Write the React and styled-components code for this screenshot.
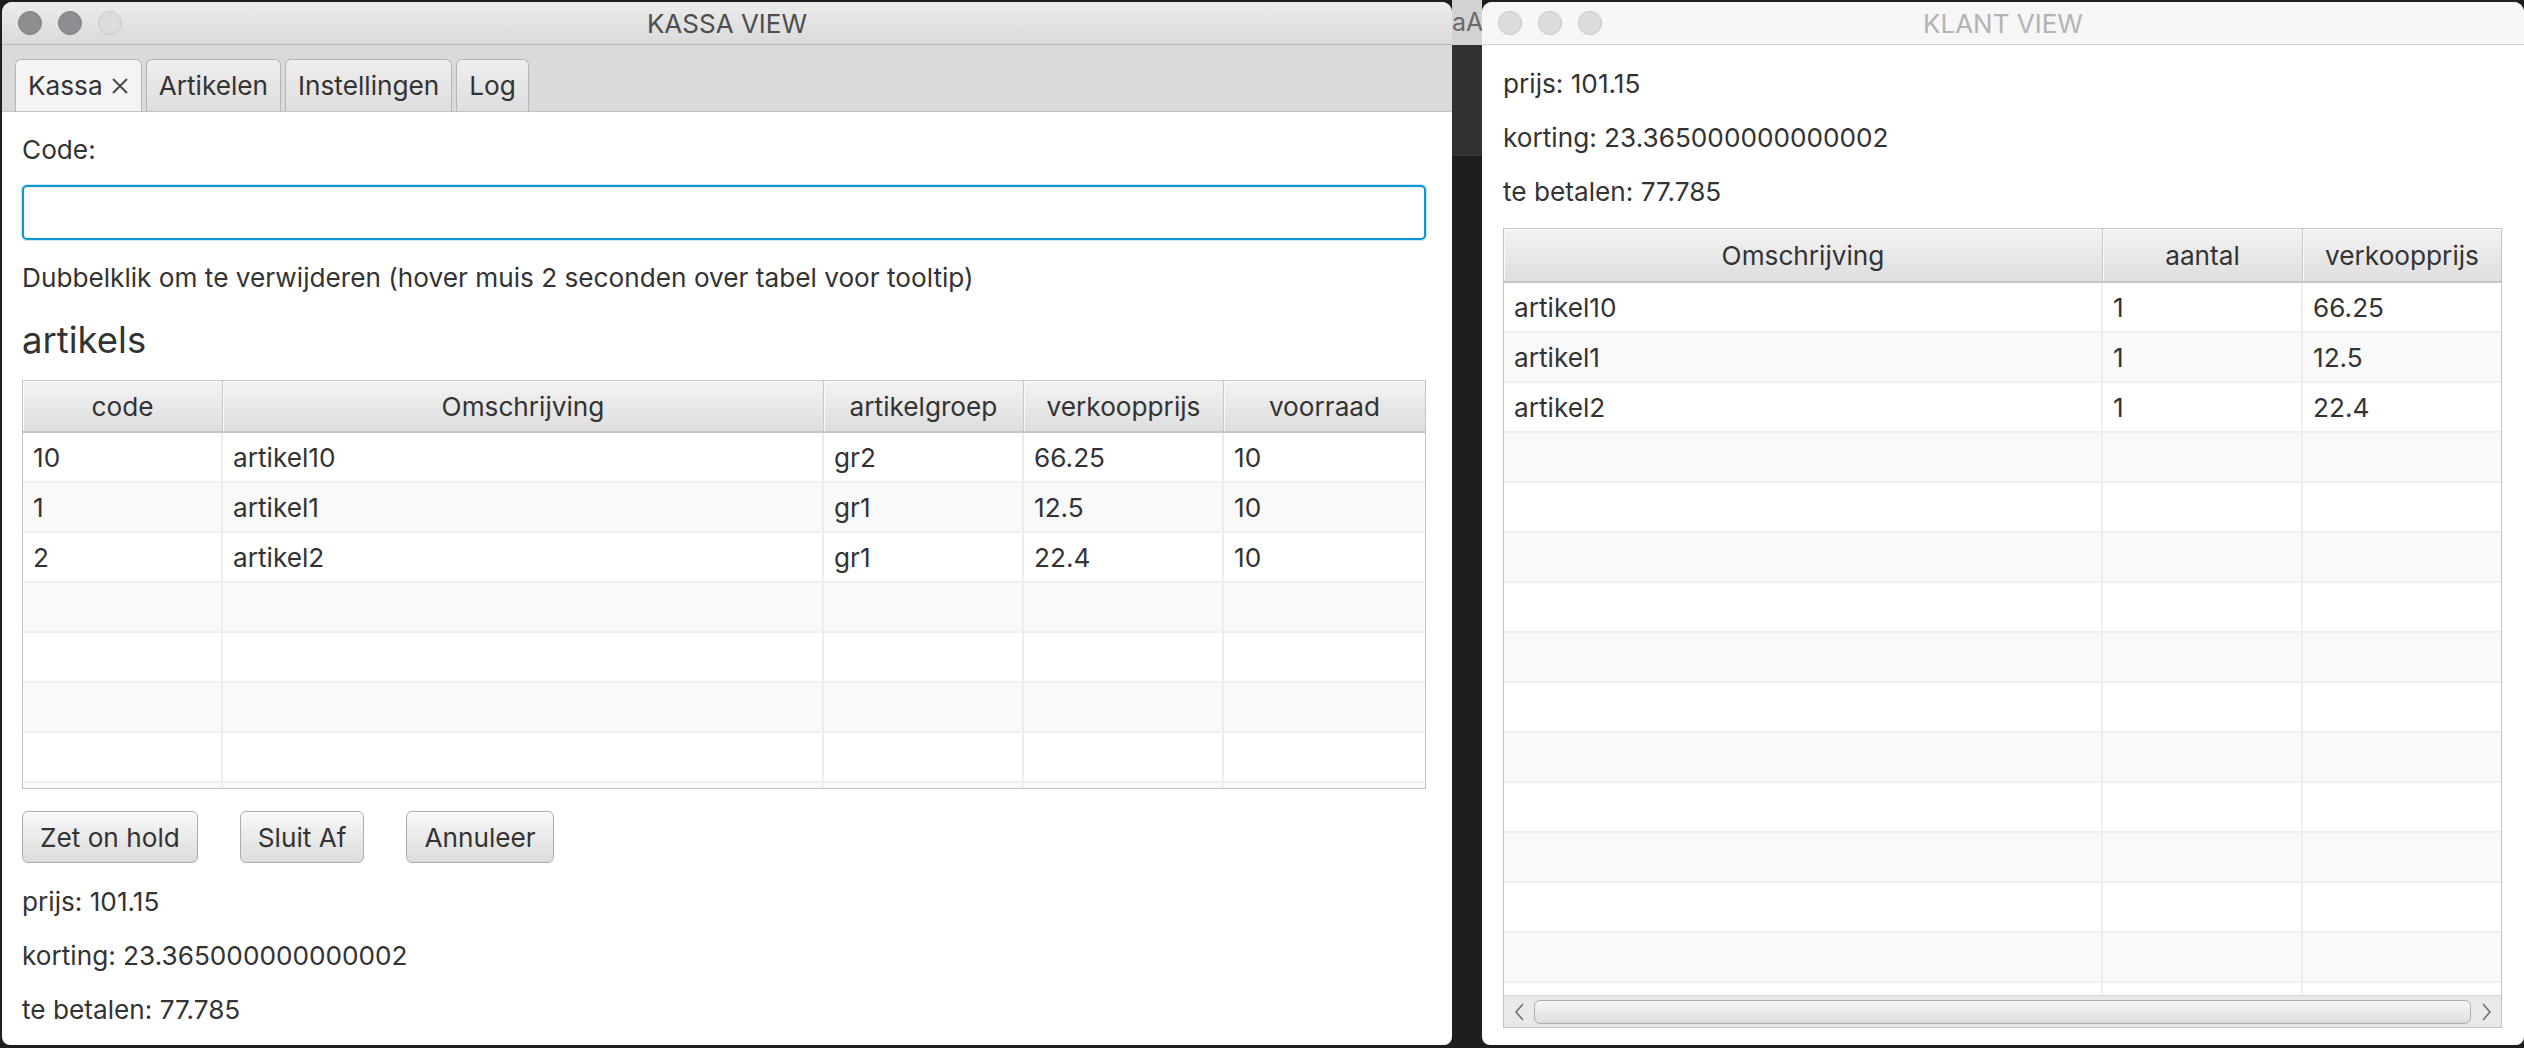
import React from 'react';
import styled, { createGlobalStyle } from 'styled-components';

const GlobalStyle = createGlobalStyle`
  html, body {
    margin: 0;
    padding: 0;
    background: #1e1e1e;
  }
  body {
    font-family: Inter, "Liberation Sans", sans-serif;
    color: #333;
    overflow: hidden;
  }
`;

const FONT = '26.2px';

const Desktop = styled.div`
  display: flex;
  align-items: flex-start;
  width: 2524px;
  height: 1048px;
  padding: 2px 0 0 2px;
  box-sizing: border-box;
  background: #1e1e1e;
  overflow: hidden;
`;

const Window = styled.div`
  flex: none;
  width: ${p => p.$width}px;
  height: 1043px;
  display: flex;
  flex-direction: column;
  background: #fff;
  border-radius: 10px 10px 8px 8px;
  overflow: hidden;
`;

const TitleBar = styled.div`
  flex: none;
  height: 42px;
  display: grid;
  grid-template-columns: 1fr auto 1fr;
  align-items: center;
  padding: 0 16px;
  background: ${p => (p.$active ? 'linear-gradient(#ececec, #dadada)' : '#f6f6f6')};
  border-bottom: 1px solid ${p => (p.$active ? '#b8b8b8' : '#d3d3d3')};
`;

const Lights = styled.div`
  display: flex;
  gap: 16px;
`;

const Light = styled.span`
  width: 24px;
  height: 24px;
  border-radius: 50%;
  box-sizing: border-box;
  background: ${p => (p.$dim ? '#dcdcdc' : '#8e8d92')};
  border: 1px solid ${p => (p.$dim ? '#c6c6c6' : '#7d7c81')};
`;

const WindowTitle = styled.div`
  font-size: 26px;
  color: ${p => (p.$active ? '#4d4d4d' : '#b3b3b3')};
`;

const TabBar = styled.div`
  flex: none;
  height: 66px;
  display: flex;
  align-items: flex-end;
  gap: 4px;
  padding-left: 13px;
  background: #dadada;
  border-bottom: 1px solid #c2c2c2;
`;

const Tab = styled.div`
  height: 52px;
  display: flex;
  align-items: center;
  gap: 8px;
  padding: 0 12px;
  box-sizing: border-box;
  border: 1px solid #b5b5b5;
  border-bottom: none;
  border-radius: 6px 6px 0 0;
  background: ${p => (p.$selected ? '#f4f4f4' : 'linear-gradient(#eeeeee, #dedede)')};
  font-size: ${FONT};
  color: #333;
`;

const Content = styled.div`
  flex: 1;
  display: flex;
  flex-direction: column;
  padding: ${p => p.$pad};
  min-height: 0;
`;

const Line = styled.div`
  height: 30px;
  line-height: 30px;
  font-size: ${FONT};
  color: #333;
  white-space: nowrap;
  margin-top: ${p => p.$mt || 0}px;
`;

const Heading = styled.div`
  height: 42px;
  line-height: 42px;
  font-size: 36.5px;
  color: #333;
  margin-top: ${p => p.$mt}px;
`;

const CodeInput = styled.input`
  height: 55px;
  margin-top: 20px;
  box-sizing: border-box;
  border: 2px solid #0a97d4;
  border-radius: 5px;
  box-shadow: 0 0 0 1px #c9e8f7, inset 0 1px 2px rgba(0, 0, 0, 0.06);
  background: #fff;
  outline: none;
  font: inherit;
  font-size: ${FONT};
  padding: 0 12px;
`;

const TableFrame = styled.div`
  height: ${p => p.$height}px;
  margin-top: ${p => p.$mt}px;
  display: flex;
  flex-direction: column;
  box-sizing: border-box;
  border: 1px solid #c3c3c3;
  background: #fff;
  overflow: hidden;
`;

const HeaderRow = styled.div`
  flex: none;
  display: grid;
  grid-template-columns: ${p => p.$cols};
  height: ${p => p.$height}px;
  box-sizing: border-box;
  border-bottom: 2px solid #c6c6c6;
`;

const HeaderCell = styled.div`
  display: flex;
  align-items: center;
  justify-content: center;
  background: linear-gradient(#f3f3f3, #dedede);
  border-right: 1px solid #c8c8c8;
  box-shadow: inset 1px 1px 0 #fafafa;
  font-size: ${FONT};
  color: #333;
  white-space: nowrap;
  overflow: hidden;

  &:last-child {
    border-right: none;
  }
`;

const Rows = styled.div`
  flex: 1;
  min-height: 0;
  overflow: hidden;
`;

const Row = styled.div`
  display: grid;
  grid-template-columns: ${p => p.$cols};
  height: 50px;
  box-sizing: border-box;
  border-bottom: 2px solid #efefef;
  background: ${p => (p.$alt ? '#f9f9f9' : '#fff')};
`;

const Cell = styled.div`
  display: flex;
  align-items: center;
  padding-left: 10px;
  border-right: 2px solid #ededed;
  font-size: ${FONT};
  color: #333;
  white-space: nowrap;
  overflow: hidden;

  &:last-child {
    border-right: none;
  }
`;

const ButtonRow = styled.div`
  display: flex;
  gap: 42px;
  margin-top: 22px;
`;

const Button = styled.button`
  height: 52px;
  padding: 0 17px;
  border: 1px solid #acacac;
  border-radius: 6px;
  background: linear-gradient(#f8f8f8, #dcdcdc);
  box-shadow: inset 0 1px 0 #fff;
  font: inherit;
  font-size: ${FONT};
  color: #333;
`;

const ScrollBar = styled.div`
  flex: none;
  height: 32px;
  display: flex;
  align-items: center;
  background: #e9e9e9;
  border-top: 1px solid #d2d2d2;
  box-sizing: border-box;
`;

const ScrollArrow = styled.div`
  width: 30px;
  display: flex;
  justify-content: center;
  color: #6e6e6e;
`;

const ScrollThumb = styled.div`
  flex: 1;
  height: 24px;
  box-sizing: border-box;
  border: 1px solid #adadad;
  border-radius: 6px;
  background: linear-gradient(#f7f7f7, #dddddd);
`;

const Backdrop = styled.div`
  flex: none;
  width: 30px;
  height: 1046px;
  margin-top: -2px;
  display: flex;
  flex-direction: column;
  overflow: hidden;
`;

const BackTitle = styled.div`
  height: 45px;
  background: #d2d2d2;
  font-size: 25px;
  line-height: 45px;
  color: #6a6a6a;
  white-space: nowrap;
`;

const BackBand = styled.div`
  height: 110px;
  background: #313131;
  border-bottom: 1px solid #3b3b3b;
`;

const CloseIcon = () => (
  <svg width="18" height="18" viewBox="0 0 18 18">
    <path d="M2 2 L16 16 M16 2 L2 16" stroke="#4a4a4a" strokeWidth="2" fill="none" />
  </svg>
);

const Chevron = ({ right }) => (
  <svg width="9" height="18" viewBox="0 0 9 18">
    <polyline
      points={right ? '1,1 8,9 1,17' : '8,1 1,9 8,17'}
      stroke="currentColor"
      strokeWidth="1.6"
      fill="none"
    />
  </svg>
);

const artikels = [
  ['10', 'artikel10', 'gr2', '66.25', '10'],
  ['1', 'artikel1', 'gr1', '12.5', '10'],
  ['2', 'artikel2', 'gr1', '22.4', '10'],
];

const klantRegels = [
  ['artikel10', '1', '66.25'],
  ['artikel1', '1', '12.5'],
  ['artikel2', '1', '22.4'],
];

const kassaCols = '200px 601px 200px 200px 1fr';
const klantCols = '599px 200px 1fr';

const Table = ({ cols, headers, data, rowCount, height, headerHeight, mt, children }) => {
  const rows = [];
  for (let i = 0; i < rowCount; i++) {
    rows.push(data[i] || headers.map(() => ''));
  }
  return (
    <TableFrame $height={height} $mt={mt}>
      <HeaderRow $cols={cols} $height={headerHeight}>
        {headers.map(h => (
          <HeaderCell key={h}>{h}</HeaderCell>
        ))}
      </HeaderRow>
      <Rows>
        {rows.map((r, i) => (
          <Row key={i} $cols={cols} $alt={i % 2 === 1}>
            {r.map((c, j) => (
              <Cell key={j}>{c}</Cell>
            ))}
          </Row>
        ))}
      </Rows>
      {children}
    </TableFrame>
  );
};

const Totals = ({ first }) => (
  <>
    <Line $mt={first}>prijs: 101.15</Line>
    <Line $mt={24}>korting: 23.365000000000002</Line>
    <Line $mt={24}>te betalen: 77.785</Line>
  </>
);

const App = () => {
  return (
    <Desktop>
      <GlobalStyle />

      <Window $width={1450}>
        <TitleBar $active>
          <Lights>
            <Light />
            <Light />
            <Light $dim />
          </Lights>
          <WindowTitle $active>KASSA VIEW</WindowTitle>
          <span />
        </TitleBar>
        <TabBar>
          <Tab $selected>
            Kassa <CloseIcon />
          </Tab>
          <Tab>Artikelen</Tab>
          <Tab>Instellingen</Tab>
          <Tab>Log</Tab>
        </TabBar>
        <Content $pad="23px 26px 0 20px">
          <Line>Code:</Line>
          <CodeInput />
          <Line $mt={23}>Dubbelklik om te verwijderen (hover muis 2 seconden over tabel voor tooltip)</Line>
          <Heading $mt={26}>artikels</Heading>
          <Table
            cols={kassaCols}
            headers={['code', 'Omschrijving', 'artikelgroep', 'verkoopprijs', 'voorraad']}
            data={artikels}
            rowCount={8}
            height={409}
            headerHeight={52}
            mt={19}
          />
          <ButtonRow>
            <Button>Zet on hold</Button>
            <Button>Sluit Af</Button>
            <Button>Annuleer</Button>
          </ButtonRow>
          <Totals first={24} />
        </Content>
      </Window>

      <Backdrop>
        <BackTitle>aAp</BackTitle>
        <BackBand />
      </Backdrop>

      <Window $width={1042}>
        <TitleBar>
          <Lights>
            <Light $dim />
            <Light $dim />
            <Light $dim />
          </Lights>
          <WindowTitle>KLANT VIEW</WindowTitle>
          <span />
        </TitleBar>
        <Content $pad="24px 22px 0 21px">
          <Totals first={0} />
          <Table
            cols={klantCols}
            headers={['Omschrijving', 'aantal', 'verkoopprijs']}
            data={klantRegels}
            rowCount={16}
            height={800}
            headerHeight={54}
            mt={21}
          >
            <ScrollBar>
              <ScrollArrow>
                <Chevron />
              </ScrollArrow>
              <ScrollThumb />
              <ScrollArrow>
                <Chevron right />
              </ScrollArrow>
            </ScrollBar>
          </Table>
        </Content>
      </Window>
    </Desktop>
  );
};

export default App;
